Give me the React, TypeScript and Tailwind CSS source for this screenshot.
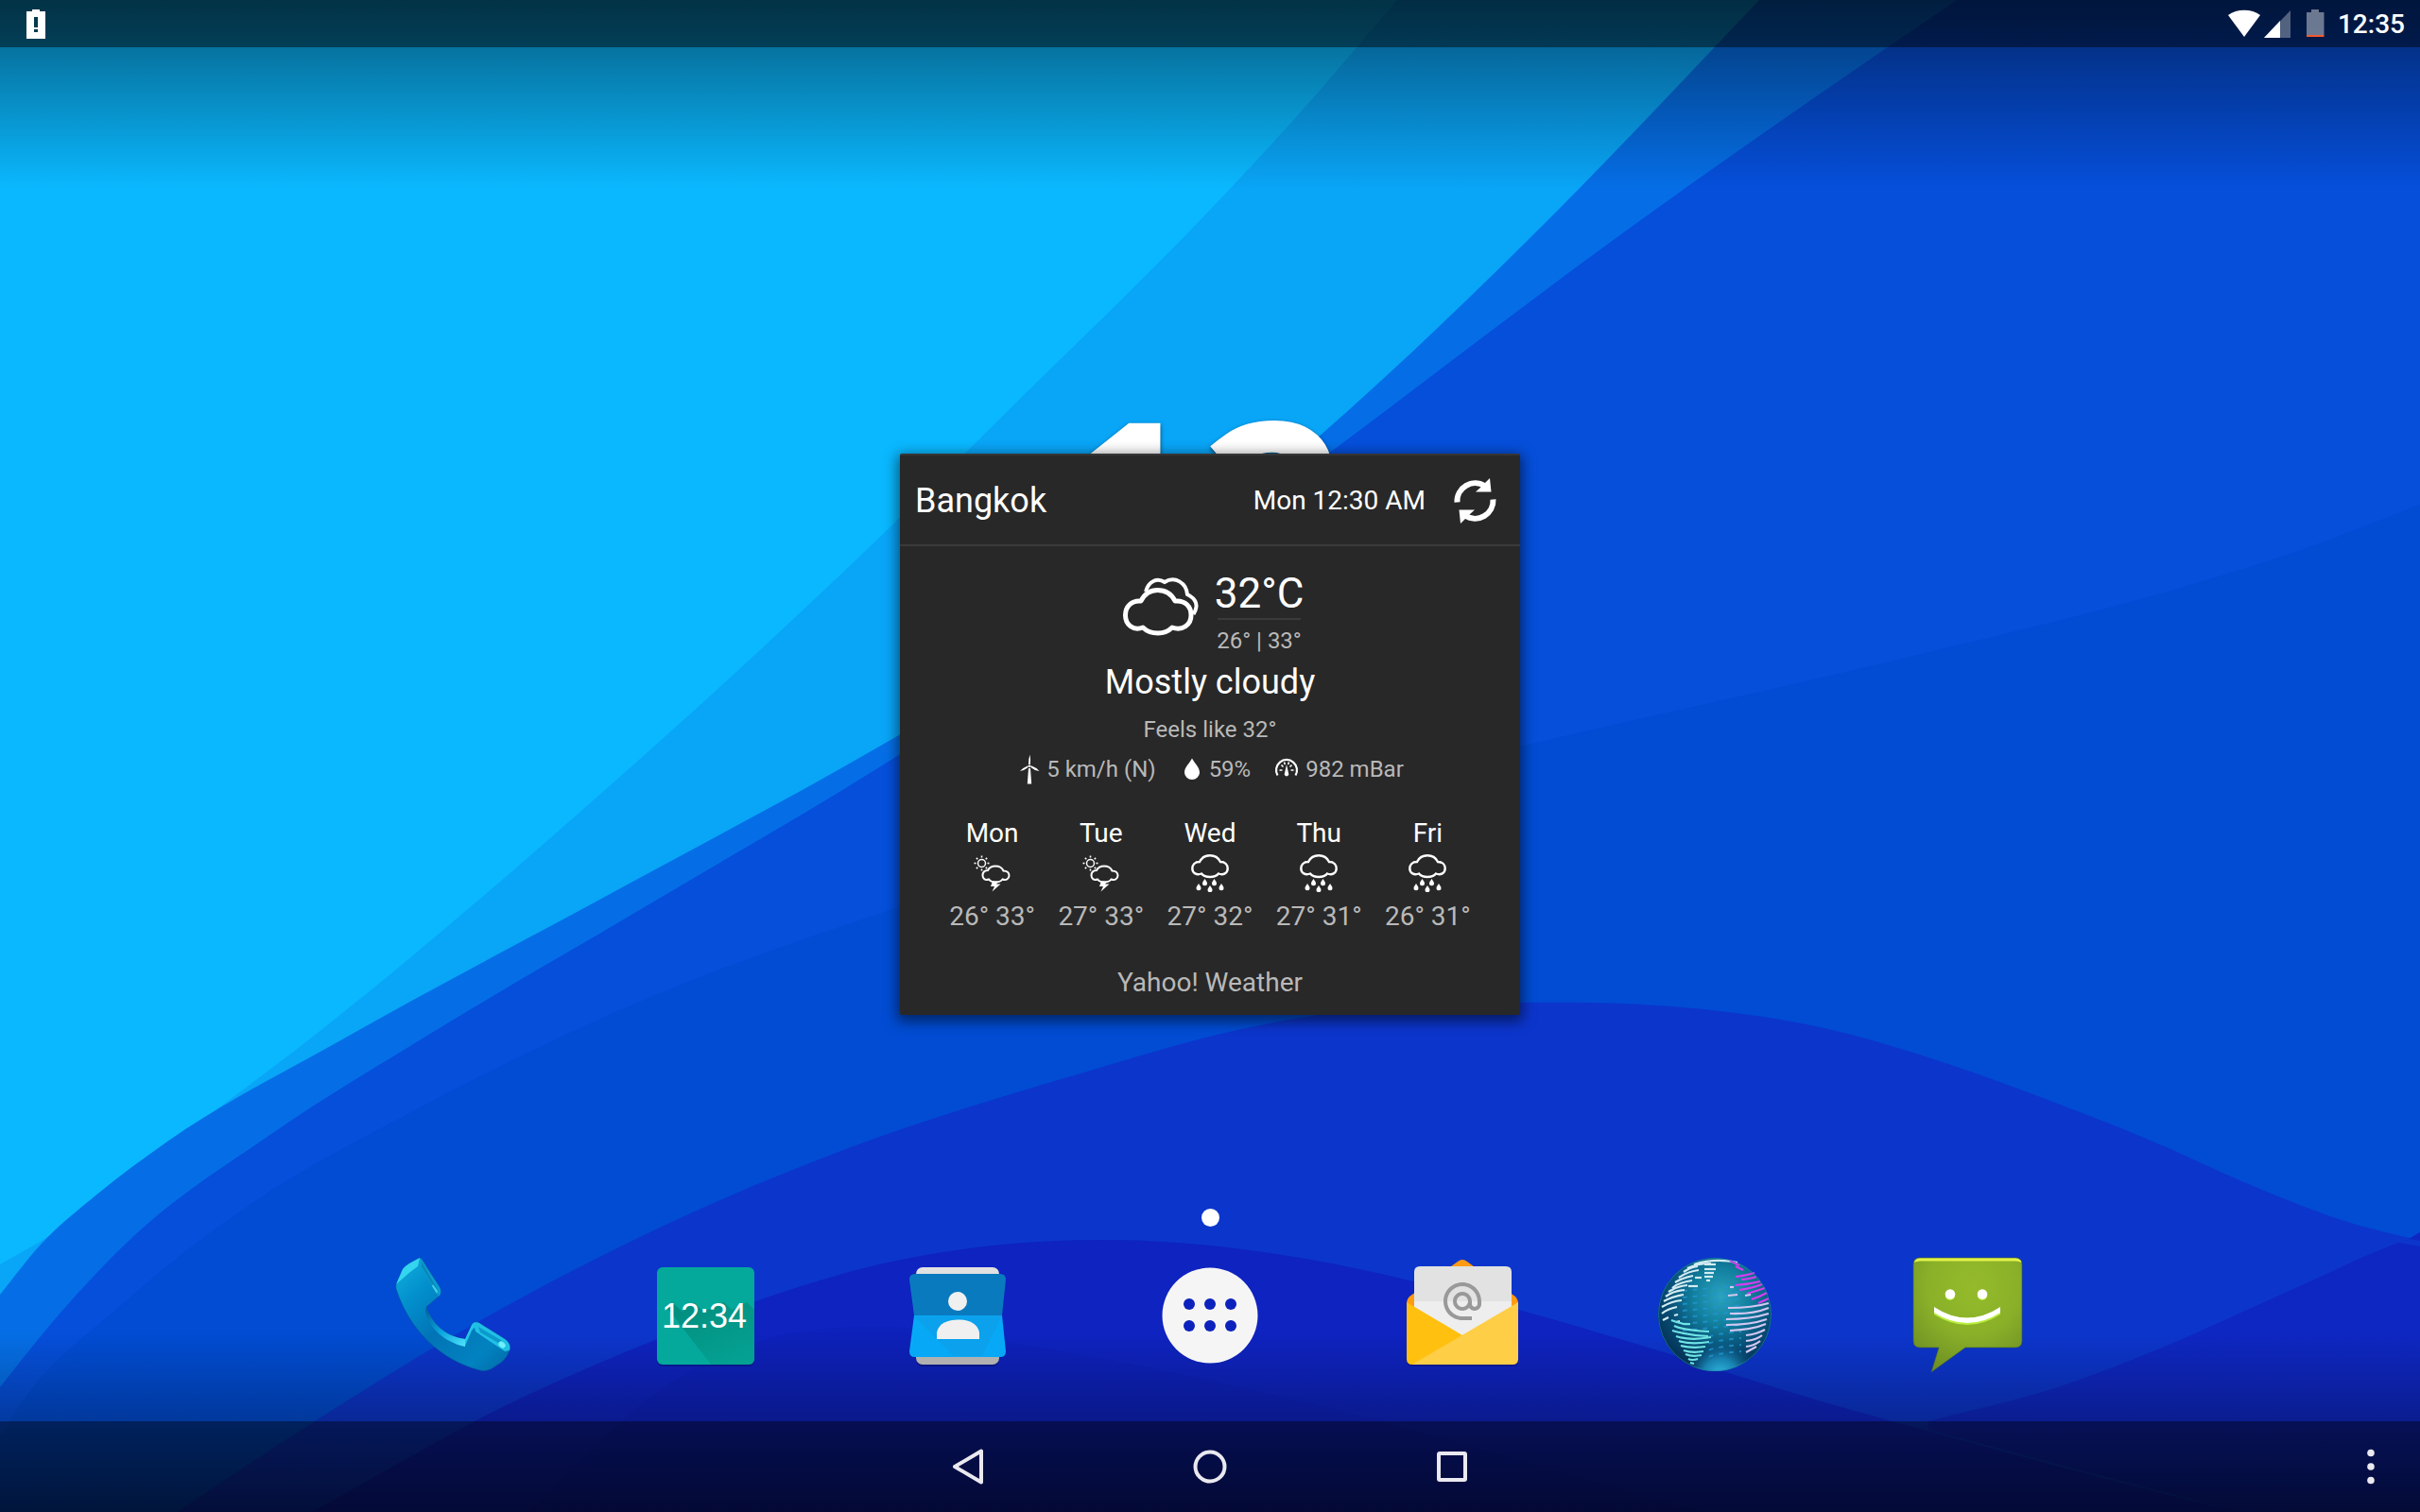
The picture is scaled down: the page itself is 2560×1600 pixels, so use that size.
import React from "react";
import { MdAlternateEmail } from "react-icons/md";

type Point = [number, number];

/** Smooth path through points whose x only grows; slopes are weighted by the spacing. */
function curve(points: Point[]): string {
  const last = points.length - 1;
  const step = (i: number) => points[i + 1][0] - points[i][0];
  const rise = (i: number) => (points[i + 1][1] - points[i][1]) / step(i);
  const slope = (i: number) => {
    if (i === 0) return rise(0);
    if (i === last) return rise(last - 1);
    return (step(i) * rise(i - 1) + step(i - 1) * rise(i)) / (step(i - 1) + step(i));
  };
  let d = `${points[0][0]} ${points[0][1]}`;
  for (let i = 0; i < last; i++) {
    const third = step(i) / 3;
    const [x1, y1] = points[i];
    const [x2, y2] = points[i + 1];
    d += ` C${x1 + third} ${y1 + slope(i) * third} ${x2 - third} ${y2 - slope(i + 1) * third} ${x2} ${y2}`;
  }
  return d;
}

const waves: { fill: string; points: Point[] }[] = [
  {
    fill: "#09a5f7",
    points: [[0, 1338], [52, 1308], [177, 1213], [327, 1100], [640, 836], [930, 569], [1071, 430], [1282, 220], [1371, 124], [1478, 0]],
  },
  {
    fill: "#056ee6",
    points: [[0, 1370], [43, 1317], [100, 1266], [177, 1208], [362, 1100], [660, 938], [930, 790], [1180, 637], [1394, 463], [1551, 318], [1673, 197], [1861, 0]],
  },
  {
    fill: "#054fdb",
    points: [[0, 1468], [53, 1402], [133, 1316], [290, 1198], [445, 1100], [690, 955], [930, 812], [1180, 648], [1408, 478], [1730, 237], [1959, 76], [2070, 0]],
  },
  {
    fill: "#014cd3",
    points: [[0, 1520], [17, 1493], [133, 1377], [267, 1273], [433, 1178], [686, 1056], [930, 967], [1250, 874], [1633, 784], [2041, 690], [2286, 628], [2440, 580], [2560, 534]],
  },
  {
    fill: "#0c35cc",
    points: [[187, 1600], [333, 1504], [500, 1402], [700, 1298], [900, 1214], [1143, 1136], [1309, 1090], [1430, 1069], [1600, 1061], [1780, 1066], [1930, 1088], [2040, 1119], [2140, 1154], [2273, 1206], [2400, 1262], [2480, 1292], [2560, 1313]],
  },
  {
    fill: "#0e23c0",
    points: [[330, 1600], [550, 1480], [693, 1418], [820, 1370], [930, 1338], [1050, 1318], [1180, 1312], [1350, 1327], [1470, 1350], [1610, 1387], [1757, 1430], [1890, 1472], [2060, 1520], [2340, 1593], [2370, 1600]],
  },
];

function Wallpaper() {
  return (
    <div className="absolute inset-0 bg-[#0ab8ff]" aria-hidden="true">
      <svg className="size-full" viewBox="0 0 2560 1600" preserveAspectRatio="none">
        {waves.map(({ fill, points }) => (
          <path key={fill} fill={fill} d={`M${curve(points)} L2560 ${points[points.length - 1][1]} V1600 H0 V${points[0][1]}Z`} />
        ))}
        <path
          fill="#0e27c2"
          d={`M${curve([[2040, 1504], [2180, 1467], [2290, 1425], [2373, 1388], [2457, 1350], [2507, 1327], [2537, 1315]])} L2560 1319 V1600 H2370 L2040 1513Z`}
        />
        <path fill="#0e27c2" d="M2548 1311 L2560 1304 V1313Z" />
        <path fill="#0c1fb4" opacity="0.4" d={`M${curve([[560, 1600], [700, 1470], [820, 1415], [914, 1404], [1073, 1422], [1350, 1477], [1800, 1600]])}Z`} />
      </svg>
      <div className="absolute inset-x-0 top-0 h-[200px] bg-linear-to-b from-black/50 to-transparent" />
      <div className="absolute inset-x-0 bottom-0 h-[190px] bg-linear-to-t from-black/53 to-transparent" />
    </div>
  );
}

function StatusBar() {
  return (
    <header className="relative flex h-[50px] items-center justify-between bg-black/45 px-4 pt-0.5">
      <svg className="h-8 w-11" viewBox="0 0 44 32" role="img" aria-label="Battery alert">
        <path fill="#fff" fillRule="evenodd" d="M12 2H18V-1H26V2H32V31H12Z M20 8V19H24V8Z M20 21V24H24V21Z" />
      </svg>
      <div className="flex items-center">
        <svg className="h-8 w-[34px]" viewBox="0 0 34 32" role="img" aria-label="Wi-Fi">
          <path fill="#fff" d="M0 6 C9 -1 25 -1 34 6 L17 29Z" />
        </svg>
        <svg className="ml-1 h-8 w-7" viewBox="0 0 28 32" role="img" aria-label="Signal">
          <path fill="#fff" fillOpacity="0.32" d="M28 1V30H0Z" />
          <path fill="#fff" d="M17 12V30H0Z" />
        </svg>
        <svg className="ml-4 h-8 w-5" viewBox="0 0 20 32" role="img" aria-label="Battery low">
          <path fill="#fff" fillOpacity="0.42" d="M1 3H6V0H14V3H19.5V27H1Z" />
          <path fill="#f4592b" d="M1 27H19.500V29H1Z" />
        </svg>
        <time className="ml-3.5 text-[28px] leading-8 font-medium text-white">12:35</time>
      </div>
    </header>
  );
}

function RefreshIcon() {
  const half = (
    <>
      <path d="M5.500 25.500 A19 19 0 0 1 35 8.500" fill="none" stroke="#fff" strokeWidth="6" />
      <path d="M40 0 L41.500 14.500 H25 L30 10Z" fill="#fff" />
    </>
  );
  return (
    <svg className="size-12" viewBox="0 0 48 48">
      {half}
      <g transform="rotate(180 24.5 24)">{half}</g>
    </svg>
  );
}

function CloudyIcon() {
  return (
    <svg className="h-[72px] w-[88px]" viewBox="0 0 88 72" fill="none" stroke="#fff" role="img" aria-label="Mostly cloudy">
      <path
        strokeWidth="5"
        strokeLinejoin="round"
        d="M26 34 C30 26 36 22.500 43.500 22.500 C51 22.500 58 26 62 34 C73 33 79 40 79 49 C79 59 70 66 59 62 C55 66 50 68 44 68 C38 68 32 66 28 62 C18 66 9.500 59 9.500 49 C9.500 40 16 33 26 34Z"
      />
      <path strokeWidth="4" d="M31 24 C34 13 43 9 51 14 C62 7 74 15 75 27 C85 32 87 39 81.500 48" />
    </svg>
  );
}

const smallCloud = "M9 8 C11 4 15 1.300 20 1.300 C25 1.300 29 4 31 8 C36 8 38.700 11 38.700 15 C38.700 20 34 22.500 29 20.500 C27 23 23.500 24 20 24 C16.500 24 13 23 11 20.500 C6 22.500 1.300 20 1.300 15 C1.300 11 4 8 9 8Z";

function RainIcon() {
  const drops: Point[] = [[14.5, 26], [24.5, 26], [8, 31], [20, 33], [32, 31]];
  return (
    <svg className="size-10" viewBox="0 0 40 40" role="img" aria-label="Rain">
      <path d={smallCloud} fill="none" stroke="#fff" strokeWidth="2.4" />
      {drops.map(([x, y]) => (
        <path key={x} fill="#fff" d={`M${x} ${y} C${x + 1} ${y + 2} ${x + 2.5} ${y + 3} ${x + 2.5} ${y + 4.7} A2.500 2.500 0 0 1 ${x - 2.5} ${y + 4.7} C${x - 2.5} ${y + 3} ${x - 1} ${y + 2} ${x} ${y}Z`} />
      ))}
    </svg>
  );
}

function StormIcon() {
  const rays = [0, 45, 90, 135, 180, 225, 270, 315];
  return (
    <svg className="size-10" viewBox="0 0 40 40" role="img" aria-label="Thunderstorm">
      <g fill="none" stroke="#fff">
        <circle cx="8.500" cy="9.500" r="4" strokeWidth="1.500" />
        {rays.map((angle) => (
          <path key={angle} d="M8.500 3.500V1.500" strokeWidth="1.600" transform={`rotate(${angle} 8.500 9.500)`} />
        ))}
        <path
          fill="#282828"
          strokeWidth="2"
          d="M15 17 C16.500 14 19.500 12.500 23 12.500 C27 12.500 30 14 31.500 17.500 C35 17.500 37.500 19.500 37.500 22.500 C37.500 26 34 28 30.500 26.500 C29 28.500 26.500 29.500 23 29.500 C19.500 29.500 17.500 28.500 16 26.500 C12.500 28 9.500 26 9.500 22.500 C9.500 19 11.500 17 15 17Z"
        />
      </g>
      <path fill="#fff" d="M20 28.500 H26.500 L24 31.500 H28.500 L19.500 39.500 L22 34 H18Z" />
    </svg>
  );
}

function WindIcon() {
  return (
    <svg className="h-8 w-7" viewBox="0 0 28 32" fill="#fff" aria-hidden="true">
      <path d="M13 11 Q12.800 5 14.500 0.500 Q15.500 6 14.800 11Z M12.800 12 L12.300 14.200 Q8 17.500 4 18 Q7 14.500 12.800 12Z M15.400 12 Q21 14 24.500 18 Q19.500 17.500 15.400 14Z M13 15H15L16.200 31.500H11.800Z" />
      <circle cx="14" cy="12.700" r="1.200" />
    </svg>
  );
}

function DropIcon() {
  return (
    <svg className="h-8 w-7" viewBox="0 0 28 32" fill="#fff" aria-hidden="true">
      <path d="M14 4.500 C17 10 22 14 22 19.500 A8 7.500 0 0 1 6 19.500 C6 14 11 10 14 4.500Z" />
    </svg>
  );
}

function GaugeIcon() {
  return (
    <svg className="h-8 w-[30px]" viewBox="0 0 30 32" aria-hidden="true">
      <path d="M4.500 22.500 A11 11 0 1 1 23.500 22.500" fill="none" stroke="#fff" strokeWidth="2.200" />
      <g stroke="#fff" strokeWidth="1.600">
        <path d="M6.500 17H9.500M18.500 17H21.500M8.500 11.500L10.500 13.500M19.500 11.500L17.500 13.500M11.500 8.500L12.300 11M16.500 8.500L15.700 11" />
      </g>
      <path d="M14 11 L16 20 A2.300 2.300 0 1 1 12 20Z" fill="#fff" />
    </svg>
  );
}

const forecast = [
  { day: "Mon", icon: StormIcon, temps: "26° 33°" },
  { day: "Tue", icon: StormIcon, temps: "27° 33°" },
  { day: "Wed", icon: RainIcon, temps: "27° 32°" },
  { day: "Thu", icon: RainIcon, temps: "27° 31°" },
  { day: "Fri", icon: RainIcon, temps: "26° 31°" },
];

function WeatherCard() {
  return (
    <section className="w-[656px] rounded-xs border-t-2 border-[#363636] bg-[#282828] text-white shadow-[0_4px_14px_3px_rgba(0,0,0,0.5)]">
      <div className="flex h-24 items-center border-b-2 border-[#3a3a3a] pt-0.5 pr-6 pl-4">
        <h1 className="flex-1 text-[36px] leading-10">Bangkok</h1>
        <time className="text-[28px] leading-9">Mon 12:30 AM</time>
        <button type="button" aria-label="Refresh" className="ml-7">
          <RefreshIcon />
        </button>
      </div>
      <div className="flex flex-col items-center pt-6 pb-4 text-[#b9b9b9]">
        <div className="flex gap-4">
          <CloudyIcon />
          <div className="flex flex-col items-center">
            <p className="text-[44px] leading-[52px] text-white">32°C</p>
            <hr className="w-[88px] border-t-2 border-[#3a3a3a]" />
            <p className="mt-2 text-[24px] leading-7">26° | 33°</p>
          </div>
        </div>
        <h2 className="mt-2.5 text-[36px] leading-10 text-white">Mostly cloudy</h2>
        <p className="mt-3.5 text-[24px] leading-8">Feels like 32°</p>
        <ul className="mt-2.5 flex gap-6 text-[24px] leading-8">
          <li className="flex items-center gap-1">
            <WindIcon />5 km/h (N)
          </li>
          <li className="flex items-center gap-1">
            <DropIcon />
            59%
          </li>
          <li className="flex items-center gap-1">
            <GaugeIcon />
            982 mBar
          </li>
        </ul>
        <ul className="mt-[34px] grid w-full grid-cols-5 px-10 text-[28px] leading-9">
          {forecast.map(({ day, icon: Icon, temps }) => (
            <li key={day} className="flex flex-col items-center">
              <h3 className="text-white">{day}</h3>
              <div className="mt-1">
                <Icon />
              </div>
              <p className="mt-2 whitespace-nowrap">{temps}</p>
            </li>
          ))}
        </ul>
        <p className="mt-[34px] text-[28px] leading-9">Yahoo! Weather</p>
      </div>
    </section>
  );
}

function PhoneIcon() {
  return (
    <svg className="size-32" viewBox="0 0 128 128">
      <defs>
        <linearGradient id="phone-body" x1="0" y1="0" x2="1" y2="1">
          <stop offset="0" stopColor="#12b0dc" />
          <stop offset="0.25" stopColor="#0290cd" />
          <stop offset="0.5" stopColor="#0274b6" />
          <stop offset="0.8" stopColor="#0282c0" />
          <stop offset="1" stopColor="#016aa8" />
        </linearGradient>
        <linearGradient id="phone-inner" x1="0" y1="0" x2="1" y2="1">
          <stop offset="0" stopColor="#035c98" />
          <stop offset="0.5" stopColor="#0aa4dc" />
          <stop offset="1" stopColor="#4de2fb" />
        </linearGradient>
      </defs>
      <path
        fill="url(#phone-body)"
        stroke="#034a96"
        strokeOpacity="0.5"
        d="M29 5 Q31 5 33 9 L50 36 Q53 42 49 46 L36 57 C42 75 56 88 77 91 L84 76 Q87 71 92 74 L119 91 Q126 96 124 103 Q122 110 115 116 L104 123 Q98 126 92 124 C52 113 19 84 4 38 Q3 34 5 31 L11 17 Q13 14 18 11Z"
      />
      <path fill="#34d5ee" d="M29 5 L18 11 Q13 14 11 17 L4 33 L19 20 L27 14Z" />
      <path fill="#0a9ed0" d="M29 5 L50 36 Q53 42 49 46 L29 13Z" />
      <path fill="#0b86b8" d="M31 9 L47 37 Q49 40 47 42 L31 14Z" />
      <path fill="#5ae9fa" d="M43 33 L48 40 L47 43 L42 35Z" opacity="0.7" />
      <path fill="url(#phone-inner)" d="M36 57 C42 75 56 88 77 91 L77 99 C54 94 38 78 35 61Z" />
      <path fill="#22c6e8" d="M77 98 L77 91 L84 76 Q87 71 90 75 L84 82Z" />
      <path fill="#20c0e6" d="M86 75 Q88 72 92 74 L119 91 Q126 96 124 103 L119 104 L88 83Z" />
      <path fill="#0b9ac9" d="M91 78 L115 92 Q120 96 119 99 L93 84Z" />
      <ellipse cx="116" cy="97" rx="4" ry="3" fill="#6df0fb" transform="rotate(40 116 97)" />
    </svg>
  );
}

function ClockIcon() {
  return (
    <svg className="size-32" viewBox="0 0 128 128">
      <defs>
        <linearGradient id="clock-shade" x1="0" y1="0" x2="0.700" y2="1">
          <stop offset="0" stopColor="#02806f" stopOpacity="0.75" />
          <stop offset="1" stopColor="#049c8c" stopOpacity="0.5" />
        </linearGradient>
        <clipPath id="clock-clip">
          <rect x="13" y="15" width="103" height="103" rx="6" />
        </clipPath>
      </defs>
      <rect x="13" y="17" width="103" height="103" rx="6" fill="#04105f" opacity="0.4" />
      <g clipPath="url(#clock-clip)">
        <rect x="13" y="15" width="103" height="103" fill="#04a99b" />
        <path fill="url(#clock-shade)" d="M22 56 L30 53 L40 62 L52 52 L62 62 L84 52 L92 60 L108 52 L128 72 V128 H78Z" />
      </g>
      <text x="63" y="79" textAnchor="middle" fontSize="36" fill="#fff" className="font-['Liberation_Sans',sans-serif]">
        12:34
      </text>
    </svg>
  );
}

function ContactsIcon() {
  return (
    <svg className="size-32" viewBox="0 0 128 128">
      <rect x="20" y="17" width="88" height="103" rx="7" fill="#04105f" opacity="0.5" />
      <rect x="20" y="15" width="88" height="50" rx="7" fill="#e1e1e1" />
      <rect x="20" y="68" width="88" height="50" rx="7" fill="#b1b1b1" />
      <path fill="#0a7abf" d="M19 22 H109 Q115 22 115 28 L111 66 H18 L13 28 Q13 22 19 22Z" />
      <path fill="#07a9f6" d="M18 66 H111 L115 104 Q115 110 109 110 H19 Q13 110 13 104Z" />
      <path fill="#0f9ce6" opacity="0.6" d="M18 67 L60 109 H90 L111 66Z" />
      <circle cx="64" cy="51" r="10" fill="#f0f0f0" />
      <path fill="#f0f0f0" d="M42 91 V84 C44 74 54 70.500 64.500 70.500 C75 70.500 85 74 87 84 V91Z" />
    </svg>
  );
}

function AppsIcon() {
  return (
    <svg className="size-32" viewBox="0 0 128 128">
      <circle cx="64" cy="66" r="50.500" fill="#f5f5f5" />
      {[54, 77].map((y) => [42, 64, 86].map((x) => <circle key={`${x}-${y}`} cx={x} cy={y} r="6" fill="#0c22bd" />))}
    </svg>
  );
}

function EmailIcon() {
  return (
    <svg className="size-32" viewBox="0 0 128 128">
      <path fill="#04105f" opacity="0.4" d="M5 60 H123 V114 Q123 120 117 120 H11 Q5 120 5 114Z" />
      <path fill="#ff9b12" d="M59 9 Q64 5 69 9 L120 46 Q123 49 123 54 V80 H5 V54 Q5 49 8 46Z" />
      <path fill="#e2e2e2" d="M13 20 Q13 14 19 14 H110 Q116 14 116 20 V52 H13Z" />
      <path fill="#eeeeee" d="M13 51 H116 V58 L64 88 L13 58Z" />
      <path fill="#ffc00f" d="M5 52 L64 87 V118 H11 Q5 118 5 112Z" />
      <path fill="#ffce47" d="M123 52 V112 Q123 118 117 118 H11 L14 116Z" />
      <MdAlternateEmail x="40" y="27" size="48" color="#999999" />
    </svg>
  );
}

function GlobeIcon() {
  const rows = [37, 44, 51, 58, 65, 72, 79, 86, 93, 100, 107];
  const white = [
    "M42 12Q64 5 88 10", "M35 16Q45 11 60 11", "M31 20Q38 15 46 14", "M26 26Q34 20 47 18", "M22 31Q30 26 41 24", "M19 37Q26 31 40 29",
    "M15 41Q24 35 35 34", "M12 46Q20 40 32 39", "M10 51Q19 46 31 44", "M8 57Q18 51 29 50", "M8 64Q14 59 24 57", "M9 71L15 68",
    "M53 12H65", "M53 17H65", "M53 21H63", "M53 25H62", "M55 29H59", "M36 35H46", "M43 26H50", "M21 66L25 65", "M23 73L27 72",
  ];
  const teal = [
    "M18 71Q30 76 38 75", "M21 77Q32 82 58 83", "M19 82Q36 87 57 88", "M23 88Q38 93 60 89", "M26 93Q38 97 58 94", "M28 98Q40 101 54 99",
    "M31 103Q40 106 52 104", "M33 107Q40 110 50 108", "M36 112Q40 114 46 112", "M38 116L42 117",
  ];
  const magenta = [
    "M80 8L90 13", "M86 14L94 18", "M86 25Q96 24 106 21", "M92 28Q102 27 108 25", "M86 34Q100 33 112 30", "M90 39Q104 37 114 33", "M98 43Q108 40 117 37",
    "M103 49Q112 46 119 42", "M110 53L121 48",
  ];
  const pink = [
    "M78 45L88 44", "M80 36L84 36", "M96 45L102 44", "M78 58Q104 58 121 53", "M80 64Q104 65 121 58", "M76 70Q102 70 121 64", "M76 76Q102 76 119 70",
    "M80 82Q104 81 118 75", "M97 87Q108 86 117 81", "M97 93Q108 92 114 87", "M97 99Q106 98 112 93", "M97 105L108 99",
  ];
  return (
    <svg className="size-32" viewBox="0 0 128 128" fill="none">
      <defs>
        <radialGradient id="globe-fill" cx="0.560" cy="0.340" r="0.700">
          <stop offset="0" stopColor="#2ba3c0" />
          <stop offset="0.350" stopColor="#12809f" />
          <stop offset="0.700" stopColor="#074a72" />
          <stop offset="1" stopColor="#032c4e" />
        </radialGradient>
        <radialGradient id="globe-glow" cx="0.550" cy="1.050" r="0.400">
          <stop offset="0" stopColor="#35c8ee" />
          <stop offset="0.400" stopColor="#1d93c4" stopOpacity="0.800" />
          <stop offset="0.800" stopColor="#0b5582" stopOpacity="0" />
        </radialGradient>
      </defs>
      <circle cx="64" cy="65" r="60" fill="url(#globe-fill)" />
      <circle cx="64" cy="65" r="60" fill="url(#globe-glow)" />
      <g stroke="#2196cf" strokeWidth="2" strokeDasharray="5 6" opacity="0.8">
        {rows.map((y) => (
          <path key={y} d={`M${y > 80 ? 58 : 30} ${y + 3}Q60 ${y} 92 ${y - 3}`} />
        ))}
      </g>
      <g strokeWidth="2.200">
        {white.map((d) => <path key={d} d={d} stroke="#d2ecf2" />)}
        {teal.map((d) => <path key={d} d={d} stroke="#6fe4e4" />)}
        {magenta.map((d) => <path key={d} d={d} stroke="#d73cf0" />)}
        {pink.map((d) => <path key={d} d={d} stroke="#d3c8f2" />)}
      </g>
      <circle cx="64" cy="65" r="59.500" stroke="#1d86b4" strokeOpacity="0.6" />
    </svg>
  );
}

function MessagesIcon() {
  return (
    <svg className="size-32" viewBox="0 0 128 128">
      <defs>
        <radialGradient id="bubble" cx="0.550" cy="0.250" r="0.850">
          <stop offset="0" stopColor="#95bb2b" />
          <stop offset="0.500" stopColor="#8ab029" />
          <stop offset="1" stopColor="#6a8a22" />
        </radialGradient>
      </defs>
      <path fill="url(#bubble)" stroke="#3e5f3a" strokeOpacity="0.6" d="M14 5 H115 Q122 5 122 12 V93 Q122 100 115 100 H62 L26 126 L34 100 H14 Q7 100 7 93 V12 Q7 5 14 5Z" />
      <path fill="#e2f24a" d="M14 5.500 H115 Q120 5.500 121.500 10 Q119 8.500 115 8.500 H14 Q10 8.500 8 10 Q9 5.500 14 5.500Z" />
      <g fill="#b8ee3c">
        <circle cx="46" cy="45" r="5" />
        <circle cx="80" cy="45" r="5" />
        <path d="M29 59 Q64 78 99 59 V65 Q64 87 29 65Z" />
      </g>
      <g fill="#fff">
        <circle cx="46" cy="43.500" r="5.300" />
        <circle cx="80" cy="43.500" r="5.300" />
        <path d="M29 57 Q64 80 99 57 V63 Q64 85 29 63Z" />
      </g>
    </svg>
  );
}

const dock = [
  { label: "Phone", icon: PhoneIcon },
  { label: "Clock", icon: ClockIcon },
  { label: "Contacts", icon: ContactsIcon },
  { label: "Apps", icon: AppsIcon },
  { label: "Email", icon: EmailIcon },
  { label: "Browser", icon: GlobeIcon },
  { label: "Messaging", icon: MessagesIcon },
];

function Dock() {
  return (
    <div className="grid w-[73%] grid-cols-7 self-center pb-[50px]">
      {dock.map(({ label, icon: Icon }) => (
        <button key={label} type="button" aria-label={label} className="flex justify-center">
          <Icon />
        </button>
      ))}
    </div>
  );
}

function NavigationBar() {
  return (
    <nav className="relative grid h-24 grid-cols-[1fr_auto_1fr] bg-black/40">
      <div className="col-start-2 flex">
        <button type="button" aria-label="Back" className="flex w-64 items-center justify-center">
          <svg className="size-12" viewBox="0 0 48 48" fill="none" stroke="#e9e9ef" strokeWidth="4" strokeLinejoin="round">
            <path d="M38 7.500 V40.500 L10 24Z" />
          </svg>
        </button>
        <button type="button" aria-label="Home" className="flex w-64 items-center justify-center">
          <svg className="size-12" viewBox="0 0 48 48" fill="none" stroke="#e9e9ef" strokeWidth="4">
            <circle cx="24" cy="24" r="15.500" />
          </svg>
        </button>
        <button type="button" aria-label="Overview" className="flex w-64 items-center justify-center">
          <svg className="size-12" viewBox="0 0 48 48" fill="none" stroke="#e9e9ef" strokeWidth="4">
            <rect x="10" y="10" width="28" height="28" rx="1" />
          </svg>
        </button>
      </div>
      <button type="button" aria-label="Menu" className="flex w-[104px] items-center justify-center justify-self-end">
        <svg className="size-12" viewBox="0 0 48 48" fill="#e9e9ef">
          <circle cx="24" cy="9.500" r="3.800" />
          <circle cx="24" cy="24" r="3.800" />
          <circle cx="24" cy="38.500" r="3.800" />
        </svg>
      </button>
    </nav>
  );
}

export default function App() {
  return (
    <div className="relative flex min-h-screen flex-col overflow-hidden font-[Roboto,sans-serif]">
      <Wallpaper />
      <StatusBar />
      <main className="relative flex flex-1 flex-col">
        <div className="flex flex-1 justify-center pt-[366px] pr-5">
          <time className="text-[268px] leading-[240px] font-bold text-white [text-shadow:0_2px_4px_rgba(0,0,0,0.6)] font-['Open_Sans',sans-serif]">12</time>
        </div>
        <div className="mb-7 size-[19px] self-center rounded-full bg-white" />
        <Dock />
        <div className="absolute inset-0 grid place-items-center">
          <WeatherCard />
        </div>
      </main>
      <NavigationBar />
    </div>
  );
}
